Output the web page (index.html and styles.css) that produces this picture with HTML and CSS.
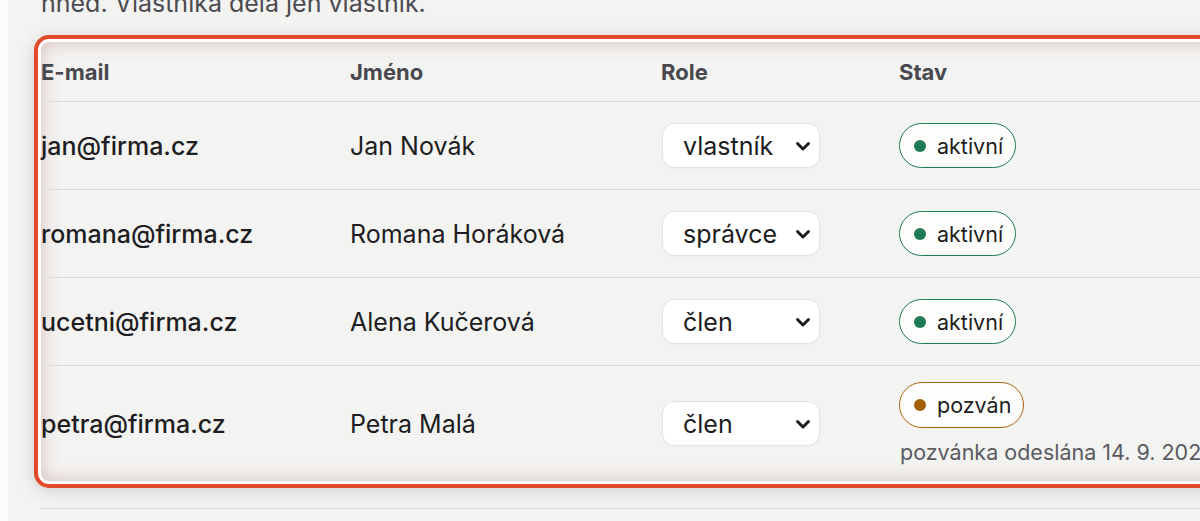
FILE: index.html
```html
<!DOCTYPE html>
<html lang="cs">
<head>
<meta charset="utf-8">
<link rel="stylesheet" href="styles.css">
</head>
<body>
<div class="page">
  <p class="intro">nned. Vlastníka dělá jen vlastník.</p>
  <div class="card">
    <table class="members">
      <colgroup>
        <col class="c-email"><col class="c-name"><col class="c-role"><col class="c-state">
      </colgroup>
      <thead>
        <tr><th>E-mail</th><th>Jméno</th><th>Role</th><th>Stav</th></tr>
      </thead>
      <tbody>
        <tr>
          <td class="email">jan@firma.cz</td>
          <td>Jan Novák</td>
          <td><select class="role"><option>vlastník</option><option>správce</option><option>člen</option></select></td>
          <td><span class="badge ok"><span class="dot"></span>aktivní</span></td>
        </tr>
        <tr>
          <td class="email">romana@firma.cz</td>
          <td>Romana Horáková</td>
          <td><select class="role"><option>správce</option><option>vlastník</option><option>člen</option></select></td>
          <td><span class="badge ok"><span class="dot"></span>aktivní</span></td>
        </tr>
        <tr>
          <td class="email">ucetni@firma.cz</td>
          <td>Alena Kučerová</td>
          <td><select class="role"><option>člen</option><option>správce</option><option>vlastník</option></select></td>
          <td><span class="badge ok"><span class="dot"></span>aktivní</span></td>
        </tr>
        <tr class="last">
          <td class="email">petra@firma.cz</td>
          <td>Petra Malá</td>
          <td><select class="role"><option>člen</option><option>správce</option><option>vlastník</option></select></td>
          <td>
            <div class="state">
              <span class="badge wait"><span class="dot"></span>pozván</span>
              <span class="sent">pozvánka odeslána 14. 9. 2024</span>
            </div>
          </td>
        </tr>
      </tbody>
    </table>
  </div>
  <div class="after"></div>
</div>
</body>
</html>
```

FILE: styles.css
```css
html, body {
  margin: 0;
  padding: 0;
  background: #fbfbfa;
  overflow: hidden;
  height: 521px;
}
body {
  font-family: Inter, "Noto Sans", sans-serif;
  color: #1d1d22;
}
.page {
  margin-left: 8px;
  background: #f3f3f1;
  height: 521px;
  padding-left: 33px;
  width: 1400px;
  box-sizing: border-box;
  overflow: hidden;
}
.intro {
  margin: -15px 0 0;
  font-size: 25px;
  line-height: 36px;
  height: 57px;
  color: #4b4b51;
}
.card {
  width: 1250px;
  border-radius: 8px;
  background: #f3f3f1;
  box-shadow:
    0 0 0 3px #ffffff,
    0 0 0 7px #e14a2d,
    0 3px 18px 6px rgba(0, 0, 0, 0.16),
    inset 0 0 18px rgba(150, 70, 60, 0.3);
}
.members {
  width: 100%;
  border-collapse: collapse;
  table-layout: fixed;
}
.c-email { width: 309px; }
.c-name { width: 311px; }
.c-role { width: 238px; }
.members th {
  text-align: left;
  font-size: 22px;
  font-weight: 700;
  color: #48484e;
  height: 59px;
  padding: 0;
  border-bottom: 1px solid #dddcd8;
  vertical-align: middle;
}
.members td {
  font-size: 25px;
  height: 87px;
  padding: 0;
  border-bottom: 1px solid #dddcd8;
  vertical-align: middle;
}
.members td.email { font-weight: 500; }
.members tr.last td {
  border-bottom: none;
  height: 115px;
}
.role {
  appearance: none;
  -webkit-appearance: none;
  width: 158px;
  height: 45px;
  border: 1px solid #e4e3df;
  border-radius: 12px;
  background: #ffffff url("data:image/svg+xml;utf8,<svg xmlns='http://www.w3.org/2000/svg' width='16' height='12' viewBox='0 0 16 12'><path d='M2.5 3.5 L8 9 L13.5 3.5' fill='none' stroke='%231d1d22' stroke-width='3' stroke-linecap='round' stroke-linejoin='round'/></svg>") no-repeat right 8px center;
  font-family: Inter, "Noto Sans", sans-serif;
  font-size: 25px;
  color: #1d1d22;
  padding: 0 0 0 20px;
  margin-left: 1px;
  box-shadow: 0 1px 2px rgba(0,0,0,0.03);
}
.badge {
  display: inline-flex;
  align-items: center;
  gap: 11px;
  height: 45px;
  box-sizing: border-box;
  padding: 0 12px 0 14px;
  border-radius: 23px;
  background: #fdfdfc;
  font-size: 21.5px;
  color: #1d1d22;
}
.badge .dot {
  width: 12px;
  height: 12px;
  border-radius: 50%;
}
.badge.ok { border: 1.5px solid #1f7a55; }
.badge.ok .dot { background: #1c7a54; }
.badge.wait { border: 1.5px solid #a8650f; height: 46px; }
.badge.wait .dot { background: #a3600b; }
.state {
  display: flex;
  flex-direction: column;
  align-items: flex-start;
  gap: 11px;
}
.sent {
  font-size: 21.5px;
  line-height: 26px;
  color: #5a5a61;
  white-space: nowrap;
  padding-left: 1px;
}
.after {
  margin-top: 27px;
  border-top: 1px solid #dcdbd7;
  width: 1250px;
}
```
